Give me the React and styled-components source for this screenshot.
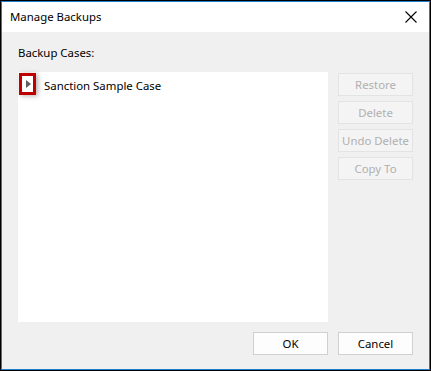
import React from "react";
import styled, { createGlobalStyle } from "styled-components";

const GlobalStyle = createGlobalStyle`
  html, body {
    margin: 0;
    padding: 0;
    background: #ffffff;
  }
  * {
    box-sizing: border-box;
  }
`;

const Window = styled.div`
  width: 431px;
  height: 371px;
  border: 1px solid #000000;
  font-family: "Noto Sans", "Liberation Sans", sans-serif;
  font-size: 11.4px;
  color: #000000;
`;

const Frame = styled.div`
  height: 100%;
  border: 1px solid #1a7fd0;
  display: flex;
  flex-direction: column;
  background: #f0f0f0;
`;

const TitleBar = styled.div`
  height: 30px;
  background: #ffffff;
  display: flex;
  align-items: center;
  justify-content: space-between;
  padding: 0 8px 0 8px;
`;

const Title = styled.span`
  line-height: 16px;
`;

const CloseButton = styled.button`
  width: 20px;
  height: 20px;
  padding: 0;
  border: none;
  background: transparent;
  display: flex;
  align-items: center;
  justify-content: center;
`;

const Body = styled.div`
  flex: 1;
  display: flex;
  flex-direction: column;
  padding: 13px 16px 14px 16px;
`;

const Label = styled.div`
  line-height: 16px;
  margin-bottom: 11px;
`;

const Main = styled.div`
  display: flex;
  gap: 10px;
`;

const ListBox = styled.div`
  width: 310px;
  height: 250px;
  background: #ffffff;
  padding: 1px 0 0 1px;
`;

const TreeRow = styled.div`
  display: flex;
  align-items: center;
  gap: 8px;
`;

const Expander = styled.div`
  width: 17px;
  height: 22px;
  border: 3px solid #c00000;
  display: flex;
  align-items: center;
  justify-content: center;
  box-shadow: 2px 1px 5px rgba(0, 0, 0, 0.3);
`;

const Arrow = styled.div`
  width: 0;
  height: 0;
  border-top: 4px solid transparent;
  border-bottom: 4px solid transparent;
  border-left: 5px solid #5f5f5f;
  margin-left: 1px;
`;

const CaseName = styled.span`
  padding-top: 3px;
`;

const Side = styled.div`
  display: flex;
  flex-direction: column;
  gap: 5px;
  padding-top: 1px;
`;

const Button = styled.button`
  width: 75px;
  height: 23px;
  padding: 0;
  font-family: inherit;
  font-size: 11.4px;
  background: ${(p) => (p.disabled ? "#f4f4f4" : "#fdfdfd")};
  border: 1px solid ${(p) => (p.disabled ? "#e3e3e3" : "#d0d0d0")};
  color: ${(p) => (p.disabled ? "#b0b0b0" : "#000000")};
`;

const Footer = styled.div`
  margin-top: auto;
  display: flex;
  justify-content: flex-end;
  gap: 10px;
`;

function CloseIcon() {
  return (
    <svg width="12" height="12" viewBox="0 0 12 12">
      <path d="M0.5 0.5 L11.5 11.5 M11.5 0.5 L0.5 11.5" stroke="#000" strokeWidth="1.1" fill="none" />
    </svg>
  );
}

export default function App() {
  const actions = ["Restore", "Delete", "Undo Delete", "Copy To"];
  return (
    <>
      <GlobalStyle />
      <Window>
        <Frame>
          <TitleBar>
            <Title>Manage Backups</Title>
            <CloseButton>
              <CloseIcon />
            </CloseButton>
          </TitleBar>
          <Body>
            <Label>Backup Cases:</Label>
            <Main>
              <ListBox>
                <TreeRow>
                  <Expander>
                    <Arrow />
                  </Expander>
                  <CaseName>Sanction Sample Case</CaseName>
                </TreeRow>
              </ListBox>
              <Side>
                {actions.map((a) => (
                  <Button key={a} disabled>
                    {a}
                  </Button>
                ))}
              </Side>
            </Main>
            <Footer>
              <Button>OK</Button>
              <Button>Cancel</Button>
            </Footer>
          </Body>
        </Frame>
      </Window>
    </>
  );
}
